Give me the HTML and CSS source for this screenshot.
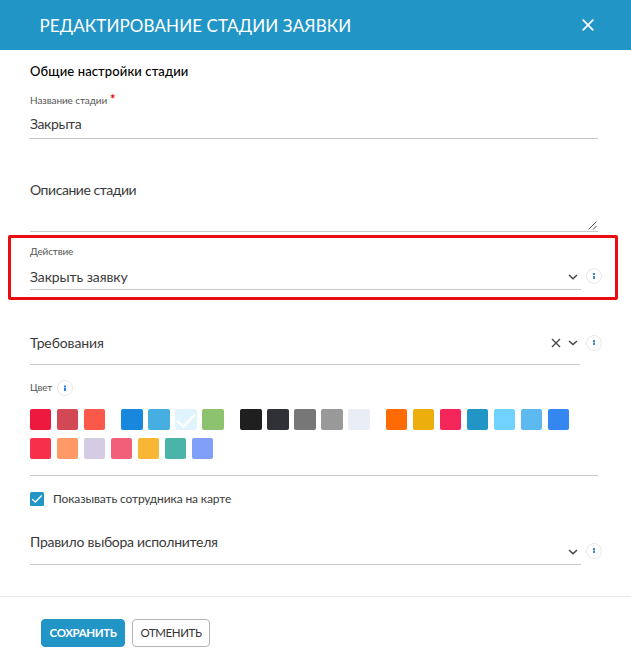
FILE: index.html
```html
<!DOCTYPE html>
<html lang="ru">
<head>
<meta charset="utf-8">
<title>Редактирование стадии заявки</title>
<link rel="stylesheet" href="styles.css">
</head>
<body>
<header class="header">
  <h1 class="title">РЕДАКТИРОВАНИЕ СТАДИИ ЗАЯВКИ</h1>
  <svg class="close" viewBox="0 0 12 12"><path d="M.7.7l10.6 10.6M11.3.7L.7 11.3"/></svg>
</header>
<main class="form">
  <h2 class="heading">Общие настройки стадии</h2>
  <section class="field name">
    <div class="label t-name">Название стадии<span class="star">*</span></div>
    <div class="value t-closed">Закрыта</div>
  </section>
  <section class="field description">
    <div class="value t-desc">Описание стадии</div>
    <svg class="grip" viewBox="0 0 9 9"><path d="M.5 8.5l8-8M5 8.5l3.5-3.5"/></svg>
  </section>
  <section class="row action">
    <div class="field">
      <div class="label t-action">Действие</div>
      <div class="value t-close">Закрыть заявку</div>
      <svg class="chevron" viewBox="0 0 10 6"><path d="M1 1l4 3.8L9 1"/></svg>
    </div>
    <svg class="info" viewBox="0 0 16 16"><circle cx="8" cy="8" r="7.5"/><path d="M7 5h2v2H7zM7 8h2v3H7z"/></svg>
  </section>
  <section class="row requirements">
    <div class="field">
      <div class="value t-req">Требования</div>
      <svg class="clear" viewBox="0 0 10 10"><path d="M1 1l8 8M9 1L1 9"/></svg>
      <svg class="chevron" viewBox="0 0 10 6"><path d="M1 1l4 3.5L9 1"/></svg>
    </div>
    <svg class="info" viewBox="0 0 16 16"><circle cx="8" cy="8" r="7.5"/><path d="M7 5h2v2H7zM7 7.5h2V10H7z"/></svg>
  </section>
  <section class="field colors">
    <div class="color-head"><span class="label t-color">Цвет</span>
      <svg class="info" viewBox="0 0 16 16"><circle cx="8" cy="8" r="7.5"/><path d="M7 5.5h2v2H7zM7 8h2v3H7z"/></svg>
    </div>
    <div class="swatches">
      <div class="group"><i class="c1"></i><i class="c2"></i><i class="c3"></i></div>
      <div class="group wide"><i class="c4"></i><i class="c5"></i><i class="c6"><svg viewBox="0 0 22 21"><path d="M2 12l6.5 5.5L20 5.5"/></svg></i><i class="c7"></i></div>
      <div class="group wide"><i class="c8"></i><i class="c9"></i><i class="c10"></i><i class="c11"></i><i class="c12"></i></div>
      <div class="group"><i class="c13"></i><i class="c14"></i><i class="c15"></i><i class="c16"></i><i class="c17"></i><i class="c18"></i><i class="c19"></i></div>
    </div>
    <div class="swatches">
      <div class="group"><i class="c20"></i><i class="c21"></i><i class="c22"></i><i class="c23"></i><i class="c24"></i><i class="c25"></i><i class="c26"></i></div>
    </div>
  </section>
  <div class="check">
    <svg class="box" viewBox="0 0 14 14"><rect width="14" height="14" rx="1.5"/><path d="M2.3 7.3l3 2.8 6.4-6.5"/></svg>
    <span class="t-check">Показывать сотрудника на карте</span>
  </div>
  <section class="row rule">
    <div class="field">
      <div class="value t-rule">Правило выбора исполнителя</div>
      <svg class="chevron" viewBox="0 0 10 6"><path d="M1 1l4 3.8L9 1"/></svg>
    </div>
    <svg class="info" viewBox="0 0 16 16"><circle cx="8" cy="8" r="7.5"/><path d="M7 5h2v2H7zM7 7.5h2V10H7z"/></svg>
  </section>
</main>
<footer class="footer">
  <button class="button save">СОХРАНИТЬ</button>
  <button class="button cancel">ОТМЕНИТЬ</button>
</footer>
</body>
</html>
```
FILE: styles.css
```css
*, *::after { box-sizing: border-box; }
body {
  margin: 0;
  height: 664px;
  overflow: hidden;
  background: #fff;
  color: #3a3a3a;
  font-family: Lato, "Open Sans", sans-serif;
  font-size: 14px;
}
svg { display: block; flex: none; fill: none; }
.header {
  height: 50px;
  padding: 0 37.5px 0 39.5px;
  display: flex;
  align-items: center;
  justify-content: space-between;
  background: #2295c7;
  color: #fff;
}
.title { margin: 0; font-size: 17px; line-height: 20px; font-weight: 400; letter-spacing: .1px; white-space: nowrap; padding-top: 1px; }
.close { width: 12px; height: 12px; stroke: #fff; stroke-width: 1.7; }
.form { height: 546px; padding: 0 33px 0 30px; white-space: nowrap; }
.heading { margin: 0; height: 39px; padding-top: 11px; font-size: 13px; line-height: 20px; font-weight: 500; letter-spacing: .12px; color: #000; }
.field { border-bottom: 1px solid #c8c8c8; position: relative; }
.label { font-size: 10px; line-height: 14px; color: #555; }
.value { line-height: 20px; }
.t-name { letter-spacing: -.1px; }
.t-closed { letter-spacing: -.4px; }
.t-desc { letter-spacing: -.45px; }
.t-action { letter-spacing: -.15px; }
.t-close { letter-spacing: -.1px; }
.t-req { letter-spacing: -.1px; }
.t-rule { letter-spacing: -.28px; }
.t-check { letter-spacing: -.12px; }
.name { height: 50px; padding-top: 4px; }
.name .value { margin-top: 7px; }
.star { margin-left: 3px; color: #e00; font-size: 13px; font-weight: 700; line-height: 10px; }
.description { height: 93px; padding-top: 41px; }
.grip { position: absolute; right: 1px; bottom: 1px; width: 9px; height: 9px; stroke: #555; stroke-width: 1; }
.row { display: flex; position: relative; }
.row .field { width: 551px; flex: none; }
.row .info { margin-left: 5px; }
.info { width: 16px; height: 16px; }
.info circle { stroke: #e9e6e6; fill: #fff; stroke-width: 1; }
.info path { fill: #4084c4; }
.chevron { position: absolute; right: 3px; width: 10px; height: 6px; stroke: #444; stroke-width: 1.5; }
.clear { position: absolute; right: 19.5px; top: 48px; width: 10px; height: 10px; stroke: #444; stroke-width: 1.3; }
.action { height: 58px; }
.action::after {
  content: "";
  position: absolute;
  left: -22px;
  top: 3px;
  width: 610px;
  height: 65px;
  border: 3px solid #e90d0f;
  border-radius: 2px;
}
.action .field { padding-top: 12px; }
.action .value { margin-top: 9px; }
.action .chevron { top: 42px; }
.action .info { margin-top: 36px; }
.requirements { height: 75px; }
.requirements .field { width: 550px; padding-top: 43px; }
.requirements .chevron { right: 2px; top: 50px; }
.requirements .info { margin: 45px 0 0 6px; }
.colors { height: 111px; padding-top: 15px; }
.color-head { display: flex; align-items: center; height: 16px; margin-bottom: 13px; }
.color-head .info { margin-left: 5px; }
.color-head .info path { fill: #2f7fe0; }
.color-head .label { width: 22px; margin-top: -2px; letter-spacing: -.2px; }
.swatches { display: flex; gap: 16px; height: 21px; margin-bottom: 8px; }
.group { display: flex; gap: 6px; }
.group i { width: 21px; height: 21px; border-radius: 2px; }
.wide { gap: 5px; }
.wide i { width: 22px; }
.group svg { width: 22px; height: 21px; stroke: #fff; stroke-width: 2.4; }
.c1 { background: #ee193f; } .c2 { background: #d24854; } .c3 { background: #fa5849; }
.c4 { background: #1888df; } .c5 { background: #47aee2; } .c6 { background: #e0f4fe; } .c7 { background: #8dc36f; }
.c8 { background: #1f1f1f; } .c9 { background: #303037; } .c10 { background: #777; } .c11 { background: #999; } .c12 { background: #e9edf6; }
.c13 { background: #ff6b02; } .c14 { background: #ecae0c; } .c15 { background: #f42558; } .c16 { background: #2295c7; }
.c17 { background: #70d2ff; } .c18 { background: #5cbaf0; } .c19 { background: #3487f0; }
.c20 { background: #f72f4b; } .c21 { background: #ff9966; } .c22 { background: #d3cce2; } .c23 { background: #f15f79; }
.c24 { background: #f7b633; } .c25 { background: #4ab4a8; } .c26 { background: #809ff9; }
.check { display: flex; align-items: center; gap: 9px; height: 46px; font-size: 12px; }
.t-check { margin-top: -1px; }
.box { width: 14px; height: 14px; }
.box rect { fill: #2295c7; }
.box path { stroke: #fff; stroke-width: 1.4; }
.rule { height: 43px; }
.rule .field { padding-top: 10px; }
.rule .chevron { top: 27px; }
.rule .info { margin-top: 21px; }
.footer { height: 68px; border-top: 1px solid #e6e6e6; padding: 22px 0 0 41px; display: flex; gap: 7px; }
.button { height: 28px; padding: 0; border-radius: 4px; font: 400 11.5px/20px Lato, "Open Sans", sans-serif; letter-spacing: -.4px; white-space: nowrap; }
.save { width: 84px; border: 1px solid #2295c7; background: #2295c7; color: #fff; font-weight: 700; }
.cancel { width: 78px; border: 1px solid #b4b4b4; background: #fff; color: #333; }
```
